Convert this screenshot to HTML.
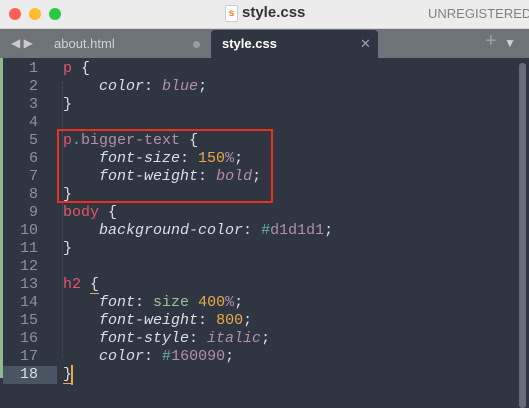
<!DOCTYPE html>
<html><head><style>
body{margin:0;width:529px;height:408px;overflow:hidden;background:#303641;font-family:"Liberation Sans",sans-serif;position:relative}
.title{position:absolute;left:0;top:0;width:529px;height:28px;background:#ececec;border-bottom:1px solid #d4d4d4}
.dot{position:absolute;top:8px;width:12px;height:12px;border-radius:50%}
.tabbar{position:absolute;left:0;top:29px;width:529px;height:29px;background:#6e7279}
.tab{position:absolute;left:211px;top:1px;width:167px;height:28px;background:#303641;border-radius:4px 4px 0 0}
.code{position:absolute;left:0;top:60px;font-family:"Liberation Mono",monospace;font-size:15px;line-height:18px;color:#dcdfe4;white-space:pre}
.ln{position:absolute;left:0;width:38px;text-align:right;color:#8d929a}
.tx{position:absolute;left:63px}
.r{color:#e0566a}.p{color:#b48ead}.o{color:#e8a94a}.g{color:#99c794}.t{color:#5fb3b3}.i{font-style:italic}
</style></head><body>
<div class="title">
<div class="dot" style="left:9px;background:#fe5f57"></div>
<div class="dot" style="left:29px;background:#febc2e"></div>
<div class="dot" style="left:49px;background:#28c840"></div>
<div style="position:absolute;left:225px;top:5px;width:11px;height:15px;background:#fff;border:1px solid #ccc;border-radius:2px"><div style="color:#f07f1a;font-size:10px;font-weight:bold;text-align:center;line-height:15px">s</div></div>
<div style="position:absolute;left:242px;top:4px;font-size:15px;font-weight:bold;color:#333">style.css</div>
<div style="position:absolute;left:428px;top:6px;font-size:13px;color:#808080">UNREGISTERED</div>
</div>
<div class="tabbar">
<div style="position:absolute;left:11px;top:7px;color:#c8cacd;font-size:12px">◀ ▶</div>
<div style="position:absolute;left:54px;top:7px;color:#d0d2d5;font-size:13px">about.html</div>
<div style="position:absolute;left:193px;top:12px;width:7px;height:7px;border-radius:50%;background:#9a9da2"></div>
<div class="tab">
<div style="position:absolute;left:11px;top:6px;color:#fff;font-size:13px;font-weight:bold">style.css</div>
<div style="position:absolute;left:149px;top:6px;color:#9ba0a8;font-size:13px">✕</div>
</div>
<div style="position:absolute;left:485px;top:1px;color:#9da0a6;font-size:20px">+</div>
<div style="position:absolute;left:504px;top:7px;color:#d0d2d5;font-size:12px">▼</div>
</div>
<div style="position:absolute;left:0;top:58px;width:3px;height:320px;background:#8fbc8f"></div>
<div style="position:absolute;left:519px;top:63px;width:7px;height:345px;background:#686d75;border-radius:3px"></div>
<div style="position:absolute;left:3px;top:366px;width:54px;height:18px;background:#4a5563"></div>
<div style="position:absolute;left:62px;top:82px;width:0;height:276px;border-left:1px dotted #4a505a"></div>
<div style="position:absolute;left:57px;top:129px;width:212px;height:70px;border:2px solid #e8321f"></div>
<div class="code">
<div class="ln" style="top:0">1
2
3
4
5
6
7
8
9
10
11
12
13
14
15
16
17
<span style="color:#dcdfe4">18</span></div>
<div class="tx" style="top:0"><span class="r">p</span> {
    <span class="i">color</span>: <span class="p i">blue</span>;
}

<span class="r">p</span><span class="t">.</span><span class="p">bigger-text</span> {
    <span class="i">font-size</span>: <span class="o">150</span><span class="p">%</span>;
    <span class="i">font-weight</span>: <span class="p i">bold</span>;
}
<span class="r">body</span> {
    <span class="i">background-color</span>: <span class="t">#</span><span class="p">d1d1d1</span>;
}

<span class="r">h2</span> <span style="border-bottom:1px solid #e8a94a">{</span>
    <span class="i">font</span>: <span class="g">size</span> <span class="o">400</span><span class="p">%</span>;
    <span class="i">font-weight</span>: <span class="o">800</span>;
    <span class="i">font-style</span>: <span class="p i">italic</span>;
    <span class="i">color</span>: <span class="t">#</span><span class="p">160090</span>;
<span style="border-bottom:1px solid #e8a94a">}</span></div>
</div>
<div style="position:absolute;left:71px;top:365px;width:2px;height:20px;background:#e8a94a"></div>
</body></html>
